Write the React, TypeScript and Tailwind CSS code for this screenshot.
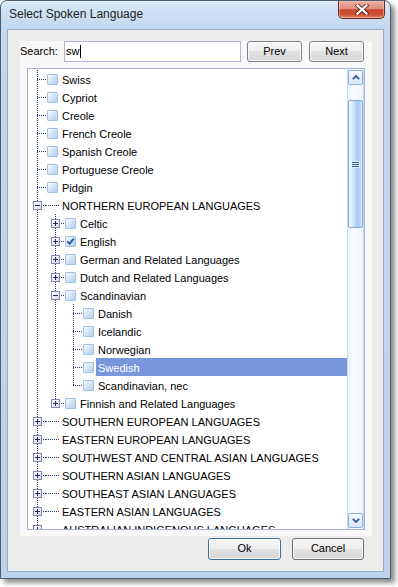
import React from "react";

type Row = {
  label: string;
  level: number;
  exp?: "plus" | "minus";
  cb?: boolean;
  checked?: boolean;
  last?: boolean;
  selected?: boolean;
};

const rows: Row[] = [
  { label: "Swiss", level: 0, cb: true },
  { label: "Cypriot", level: 0, cb: true },
  { label: "Creole", level: 0, cb: true },
  { label: "French Creole", level: 0, cb: true },
  { label: "Spanish Creole", level: 0, cb: true },
  { label: "Portuguese Creole", level: 0, cb: true },
  { label: "Pidgin", level: 0, cb: true },
  { label: "NORTHERN EUROPEAN LANGUAGES", level: 0, exp: "minus" },
  { label: "Celtic", level: 1, exp: "plus", cb: true },
  { label: "English", level: 1, exp: "plus", cb: true, checked: true },
  { label: "German and Related Languages", level: 1, exp: "plus", cb: true },
  { label: "Dutch and Related Languages", level: 1, exp: "plus", cb: true },
  { label: "Scandinavian", level: 1, exp: "minus", cb: true },
  { label: "Danish", level: 2, cb: true },
  { label: "Icelandic", level: 2, cb: true },
  { label: "Norwegian", level: 2, cb: true },
  { label: "Swedish", level: 2, cb: true, selected: true },
  { label: "Scandinavian, nec", level: 2, cb: true, last: true },
  { label: "Finnish and Related Languages", level: 1, exp: "plus", cb: true, last: true },
  { label: "SOUTHERN EUROPEAN LANGUAGES", level: 0, exp: "plus" },
  { label: "EASTERN EUROPEAN LANGUAGES", level: 0, exp: "plus" },
  { label: "SOUTHWEST AND CENTRAL ASIAN LANGUAGES", level: 0, exp: "plus" },
  { label: "SOUTHERN ASIAN LANGUAGES", level: 0, exp: "plus" },
  { label: "SOUTHEAST ASIAN LANGUAGES", level: 0, exp: "plus" },
  { label: "EASTERN ASIAN LANGUAGES", level: 0, exp: "plus" },
  { label: "AUSTRALIAN INDIGENOUS LANGUAGES", level: 0, exp: "plus" },
];

const DOT_V =
  "bg-[repeating-linear-gradient(to_bottom,#2e2e72_0px,#2e2e72_1px,transparent_1px,transparent_2px)]";
const DOT_H =
  "bg-[repeating-linear-gradient(to_right,#2e2e72_0px,#2e2e72_1px,transparent_1px,transparent_2px)]";

function Expander({ kind }: { kind: "plus" | "minus" }) {
  return (
    <div className="absolute left-[5px] top-[5px] w-[9px] h-[9px] border border-[#8488b4] bg-[linear-gradient(135deg,#ffffff,#d6d8e8)]">
      <div className="absolute left-[1px] top-[3px] w-[5px] h-px bg-[#1f2a66]" />
      {kind === "plus" && (
        <div className="absolute left-[3px] top-[1px] w-px h-[5px] bg-[#1f2a66]" />
      )}
    </div>
  );
}

function CheckBox({ checked }: { checked?: boolean }) {
  return (
    <div className="absolute left-[1px] top-[4px] w-[11px] h-[11px] rounded-[1px] border border-[#a3c1e4] bg-[linear-gradient(135deg,#fbfdff_0%,#d6e6f7_45%,#b7d1ee_100%)]">
      {checked && (
        <svg width="9" height="9" viewBox="0 0 9 9" className="absolute left-0 top-0">
          <path d="M1.3 4.3 L3.6 6.7 L7.8 1.6" fill="none" stroke="#2b5aa6" strokeWidth="1.9" />
        </svg>
      )}
    </div>
  );
}

function TreeRow({ row }: { row: Row }) {
  const anc = [];
  for (let i = 0; i < row.level; i++) {
    anc.push(
      <div key={i} className="relative w-[18px] h-full shrink-0">
        <div className={`absolute left-[9px] top-0 w-px h-full ${DOT_V}`} />
      </div>
    );
  }
  return (
    <div className="flex h-[18px] items-stretch">
      {anc}
      <div className="relative w-[18px] h-full shrink-0">
        <div className={`absolute left-[9px] top-0 w-px ${row.last ? "h-[10px]" : "h-full"} ${DOT_V}`} />
        <div className={`absolute left-[9px] top-[9px] h-px w-[9px] ${DOT_H}`} />
        {row.exp && <Expander kind={row.exp} />}
      </div>
      <div className="relative w-[14px] h-full shrink-0">
        {row.cb ? (
          <CheckBox checked={row.checked} />
        ) : (
          <div className={`absolute left-0 top-[9px] h-px w-[14px] ${DOT_H}`} />
        )}
      </div>
      <div
        className={`flex-1 min-w-0 h-full pl-[2px] whitespace-nowrap overflow-hidden leading-[18px] text-[11px] ${
          row.selected ? "bg-[#7896db] text-white" : "text-black"
        }`}
      >
        <span className="relative top-[1px]">{row.label}</span>
      </div>
    </div>
  );
}

function Chevron({ up }: { up?: boolean }) {
  return (
    <svg width="8" height="5" viewBox="0 0 8 5">
      <polyline
        points={up ? "0.8,4.2 4,1 7.2,4.2" : "0.8,0.8 4,4 7.2,0.8"}
        fill="none"
        stroke="#3a5a92"
        strokeWidth="1.8"
      />
    </svg>
  );
}

function ScrollBar() {
  return (
    <div className="w-[17px] h-full shrink-0 flex flex-col border-x border-[#c4d8ef] bg-[linear-gradient(to_right,#e6f0fb,#fafcff_35%,#f1f6fc)]">
      <div className="mt-[1px] h-[15px] rounded-[2px] border border-[#8cb2e0] bg-[linear-gradient(to_bottom,#f6fafe,#d6e7f8)] flex items-center justify-center">
        <Chevron up />
      </div>
      <div className="mt-[15px] h-[128px] rounded-[2px] border border-[#84aedd] bg-[linear-gradient(to_right,#f2f8fe_0%,#d9e9fa_25%,#c1dbf5_45%,#a8caef_62%,#b6d3f2_85%,#dfecfa_100%)] flex items-center justify-center">
        <div className="w-[9px] h-[7px] bg-[#e6f1fc] flex flex-col items-center justify-center gap-[1px]">
          <div className="w-[7px] h-px bg-[#2f5b9a]" />
          <div className="w-[7px] h-px bg-[#2f5b9a]" />
          <div className="w-[7px] h-px bg-[#2f5b9a]" />
        </div>
      </div>
      <div className="flex-1" />
      <div className="mb-[1px] h-[15px] rounded-[2px] border border-[#8cb2e0] bg-[linear-gradient(to_bottom,#f6fafe,#d6e7f8)] flex items-center justify-center">
        <Chevron />
      </div>
    </div>
  );
}

const BTN =
  "h-[21px] rounded-[3px] border bg-[linear-gradient(to_bottom,#f6f6f6_0%,#eeeeee_50%,#e2e2e2_50%,#d6d6d6_100%)] shadow-[inset_0_0_0_1px_rgba(255,255,255,0.75)] text-[11px] leading-[19px] text-black text-center";

export default function App() {
  return (
    <div className="w-[398px] h-[587px] bg-white font-['Liberation_Sans',Arial,sans-serif]">
      <div className="w-[391px] h-[579px] rounded-t-[7px] border border-[#4b5a6c] bg-[linear-gradient(to_bottom,#d7e6f7_0px,#c2d8ef_28px,#bdd3ec_100%)] shadow-[4px_4px_5px_rgba(0,0,0,0.45),inset_0_1px_0_rgba(255,255,255,0.6)] flex flex-col">
        <div className="h-[28px] flex items-start shrink-0">
          <div className="pl-[8px] pt-[5px] text-[12px] leading-[16px] text-[#1e1e1e] whitespace-nowrap">
            Select Spoken Language
          </div>
          <div className="ml-auto mr-[5px] w-[47px] h-[18px] rounded-b-[5px] border border-t-0 border-[#6b2b20] bg-[linear-gradient(to_bottom,#eab1a3_0%,#dd8e7b_45%,#c8442c_52%,#cf5236_80%,#e28a6c_100%)] shadow-[inset_0_0_0_1px_rgba(255,210,200,0.45)] flex items-center justify-center">
            <svg width="14" height="11" viewBox="0 0 14 11">
              <path d="M2.5 1.5 L11.5 9.5 M11.5 1.5 L2.5 9.5" stroke="#4a1a12" strokeWidth="4.2" strokeLinecap="square" opacity="0.75" />
              <path d="M2.5 1.5 L11.5 9.5 M11.5 1.5 L2.5 9.5" stroke="#ffffff" strokeWidth="2.3" strokeLinecap="square" />
            </svg>
          </div>
        </div>
        <div className="mx-[6px] mb-[6px] flex-1 border border-[#98abc1] bg-[#ececec] flex flex-col">
          <div className="mt-[11px] ml-[12px] mr-[11px] h-[495px] bg-[#f8f8f8] flex flex-col">
            <div className="h-[21px] flex items-stretch shrink-0">
              <div className="w-[44px] text-[11px] leading-[21px] text-black">Search:</div>
              <div className="w-[177px] border border-[#aeb5d6] bg-white flex items-center pl-[1px] text-[11px] text-black">
                <span>sw</span>
                <span className="ml-[1px] w-px h-[13px] bg-black" />
              </div>
              <div className={`ml-[6px] w-[55px] border-[#7a7f8c] ${BTN}`}>Prev</div>
              <div className={`ml-[7px] w-[55px] border-[#7a7f8c] ${BTN}`}>Next</div>
            </div>
            <div className="mt-[6px] mx-[7px] h-[462px] border border-[#a9b0d8] bg-white flex overflow-hidden">
              <div className="flex-1 min-w-0 h-full overflow-hidden pt-[1px]">
                {rows.map((r, i) => (
                  <TreeRow key={i} row={r} />
                ))}
              </div>
              <ScrollBar />
            </div>
          </div>
          <div className="mt-[2px] ml-[12px] mr-[11px] pr-[8px] flex justify-end gap-[11px]">
            <div className={`w-[73px] !h-[22px] border-[#3c6f9e] ${BTN}`}>Ok</div>
            <div className={`w-[72px] !h-[22px] border-[#707070] ${BTN}`}>Cancel</div>
          </div>
        </div>
      </div>
    </div>
  );
}
